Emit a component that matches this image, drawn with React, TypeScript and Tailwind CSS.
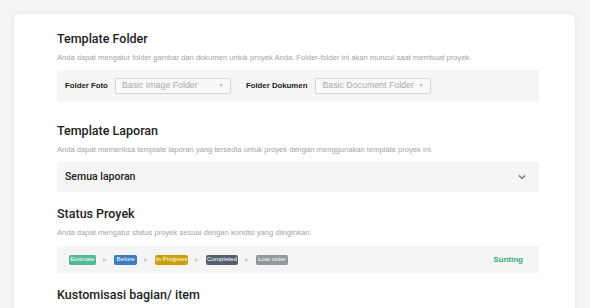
import React from 'react';

type Status = {
    label: string;
    color: string;
    width: string;
};

const statuses: Status[] = [
    { label: 'Estimate', color: 'bg-[#52b996]', width: 'w-[27px]' },
    { label: 'Before', color: 'bg-[#3d7bbf]', width: 'w-[23px]' },
    { label: 'In Progress', color: 'bg-[#c9a106]', width: 'w-[33px]' },
    { label: 'Completed', color: 'bg-[#535f6e]', width: 'w-[32px]' },
    { label: 'Lost order', color: 'bg-[#8f9a9a]', width: 'w-[32px]' },
];

const heading = { fontFamily: 'Roboto, "Liberation Sans", sans-serif' };

function SectionTitle({ title, desc }: { title: string; desc?: string }) {
    return (
        <>
            <h2 className="h-[16px] text-[12.5px] leading-[16px] font-medium text-[#222]" style={heading}>
                {title}
            </h2>
            {desc && (
                <p className="mt-[5px] h-[12px] text-[7.6px] leading-[12px] text-[#a3a3a3] whitespace-nowrap">{desc}</p>
            )}
        </>
    );
}

function FakeSelect({ placeholder }: { placeholder: string }) {
    return (
        <div className="flex h-[16px] w-[116px] items-center justify-between rounded-[2px] border border-[#d6d6d6] bg-[#f8f8f8] pl-[6px] pr-[7px]">
            <span className="text-[8.8px] leading-none whitespace-nowrap text-[#ababab]">{placeholder}</span>
            <span className="h-0 w-0 shrink-0 border-x-[2.5px] border-t-[3px] border-x-transparent border-t-[#c4c4c4]" />
        </div>
    );
}

export default function App() {
    return (
        <div
            className="h-[308px] w-[590px] overflow-hidden bg-[#f6f4f2] pt-[14px] pl-[14px] pr-[15px]"
            style={{ fontFamily: '"Liberation Sans", Arial, sans-serif' }}
        >
            <div className="h-[320px] rounded-[6px] bg-white pt-[17px] pl-[43px] pr-[36px] shadow-[0_0_6px_rgba(0,0,0,0.07)]">
                {/* Template Folder */}
                <SectionTitle
                    title="Template Folder"
                    desc="Anda dapat mengatur folder gambar dan dokumen untuk proyek Anda. Folder-folder ini akan muncul saat membuat proyek."
                />
                <div className="mt-[6px] flex h-[31px] items-center bg-[#f5f5f5] pl-[8px]">
                    <span className="text-[7.8px] font-bold text-[#222]">Folder Foto</span>
                    <div className="ml-[7px]">
                        <FakeSelect placeholder="Basic Image Folder" />
                    </div>
                    <span className="ml-[15px] text-[7.8px] font-bold text-[#222]">Folder Dokumen</span>
                    <div className="ml-[8px]">
                        <FakeSelect placeholder="Basic Document Folder" />
                    </div>
                </div>

                {/* Template Laporan */}
                <div className="mt-[22px]">
                    <SectionTitle
                        title="Template Laporan"
                        desc="Anda dapat memeriksa template laporan yang tersedia untuk proyek dengan menggunakan template proyek ini."
                    />
                    <div className="mt-[6px] flex h-[30px] items-center justify-between bg-[#f5f5f5] pl-[8px] pr-[13px]">
                        <span className="text-[10.5px] font-medium text-[#222]" style={heading}>
                            Semua laporan
                        </span>
                        <svg width="8" height="6" viewBox="0 0 8 6" fill="none">
                            <path d="M1 1.5 L4 4.5 L7 1.5" stroke="#666" strokeWidth="1.1" />
                        </svg>
                    </div>
                </div>

                {/* Status Proyek */}
                <div className="mt-[14px]">
                    <SectionTitle
                        title="Status Proyek"
                        desc="Anda dapat mengatur status proyek sesuai dengan kondisi yang diinginkan."
                    />
                    <div className="mt-[7px] flex h-[27px] items-center justify-between bg-[#f5f5f5] pl-[12px] pr-[16px]">
                        <div className="flex items-center gap-[7px]">
                            {statuses.map((s, i) => (
                                <React.Fragment key={s.label}>
                                    {i > 0 && (
                                        <span className="h-0 w-0 border-y-[2.5px] border-l-[4px] border-y-transparent border-l-[#cfcfcf]" />
                                    )}
                                    <span
                                        className={`${s.color} ${s.width} flex h-[10px] items-center justify-center rounded-[2px] text-[6.2px] leading-none text-white whitespace-nowrap`}
                                    >
                                        {s.label}
                                    </span>
                                </React.Fragment>
                            ))}
                        </div>
                        <span className="text-[8px] font-bold text-[#2bb27a]">Sunting</span>
                    </div>
                </div>

                {/* Kustomisasi */}
                <div className="mt-[14px]">
                    <SectionTitle title="Kustomisasi bagian/ item" />
                </div>
            </div>
        </div>
    );
}
